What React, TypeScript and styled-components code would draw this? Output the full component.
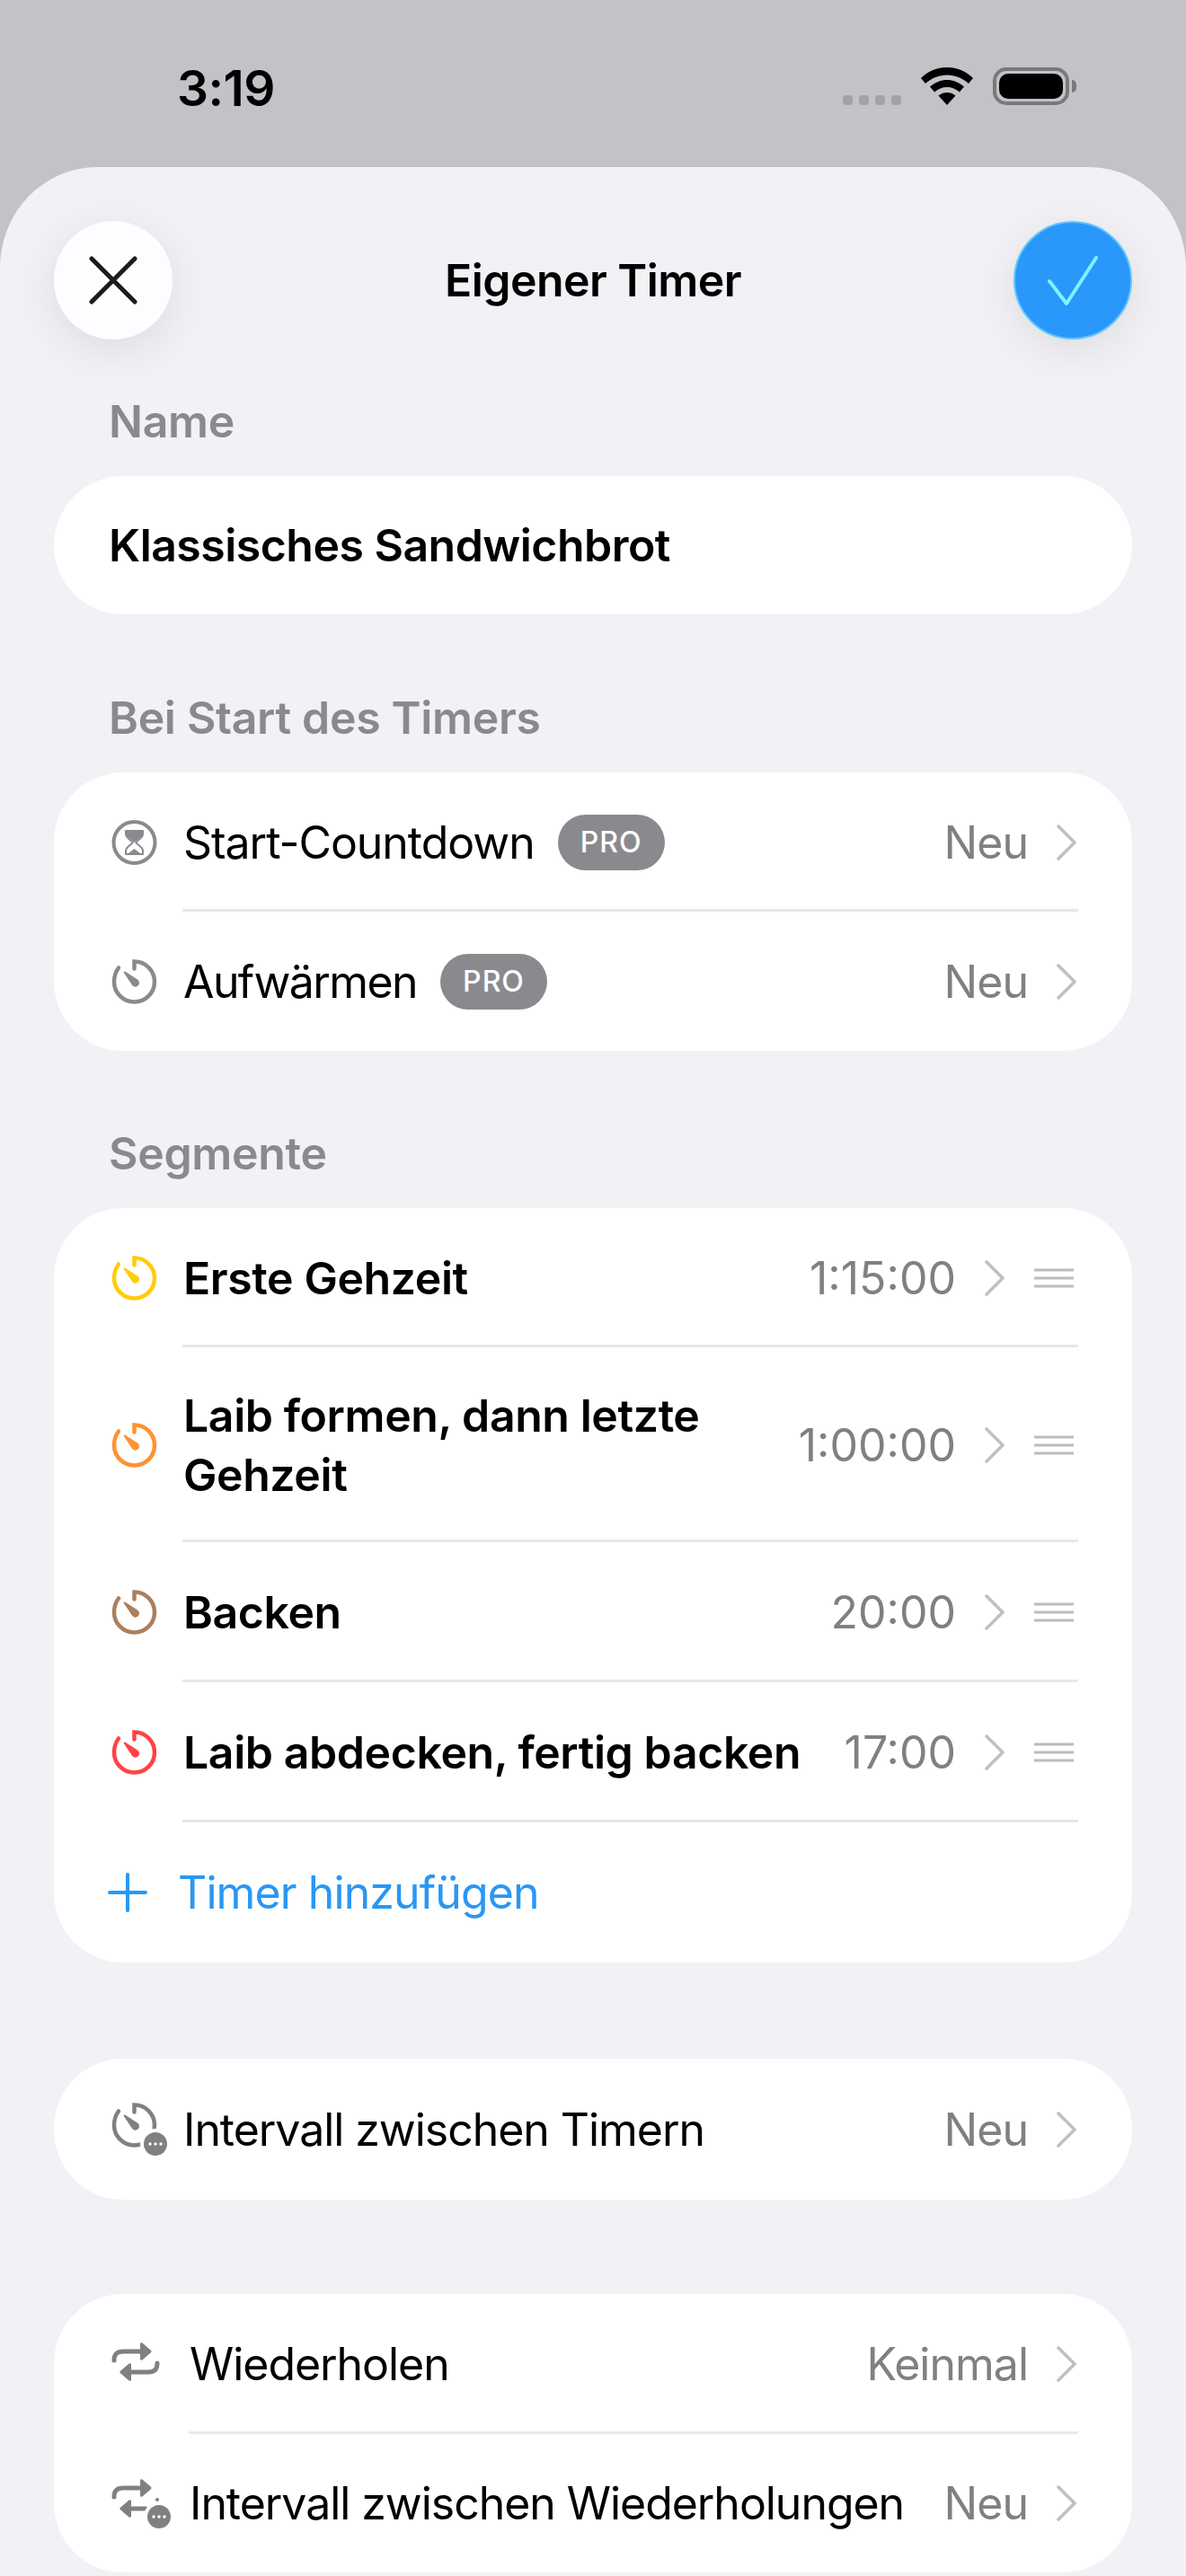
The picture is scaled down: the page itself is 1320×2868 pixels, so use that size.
import React from 'react';
import styled, { createGlobalStyle } from 'styled-components';

const GRAY = '#8a8a8e';

const GlobalStyle = createGlobalStyle`
    html, body {
        margin: 0;
        padding: 0;
        background: #c3c2c7;
    }
    body {
        font-family: Inter, "Noto Sans", sans-serif;
        color: #000;
    }
`;

const TimerGlyph: React.FC<{ color: string }> = ({ color }) => (
    <svg width='51' height='50' viewBox='0 0 51 50' fill='none'>
        <path
            d='M25.5 10.5V2.5A22.5 22.5 0 1 1 3 25C3 19 5 13.5 8 9.5'
            stroke={color}
            strokeWidth='4.5'
            strokeLinecap='round'
        />
        <path d='M13.5 14.5a1.4 1.4 0 0 1 2-.8L29 22.6a4.4 4.4 0 1 1-6 6.2z' fill={color} />
    </svg>
);

const HourglassGlyph: React.FC = () => (
    <svg width='51' height='50' viewBox='0 0 51 50' fill='none'>
        <circle cx='25.5' cy='25' r='23' stroke={GRAY} strokeWidth='4' />
        <path d='M16 12h19v4c0 3.500-6 6.500-7.800 9 1.800 2.500 7.800 5.500 7.800 9v4H16v-4c0-3.500 6-6.500 7.800-9-1.800-2.500-7.800-5.500-7.800-9z' stroke={GRAY} strokeWidth='2' strokeLinejoin='round' />
        <path d='M16 12h19v4c-1 2.500-5 5-9.500 9-4.500-4-8.500-6.500-9.500-9z' fill={GRAY} />
        <path d='M19 37l6.500-5 6.500 5z' fill={GRAY} />
    </svg>
);

const Badge: React.FC<{ cx: number; cy: number }> = ({ cx, cy }) => (
    <g>
        <circle cx={cx} cy={cy} r='17' fill='#fff' />
        <circle cx={cx} cy={cy} r='13' fill='#808080' />
        <circle cx={cx - 6} cy={cy} r='1.7' fill='#fff' />
        <circle cx={cx} cy={cy} r='1.7' fill='#fff' />
        <circle cx={cx + 6} cy={cy} r='1.7' fill='#fff' />
    </g>
);

const TimerBadgeGlyph: React.FC = () => (
    <svg width='64' height='60' viewBox='0 0 64 60' fill='none' style={{ overflow: 'visible' }}>
        <path
            d='M25.5 10.5V2.5A22.5 22.5 0 1 1 3 25C3 19 5 13.5 8 9.5'
            stroke='#808080'
            strokeWidth='4.5'
            strokeLinecap='round'
        />
        <path d='M13.5 14.5a1.4 1.4 0 0 1 2-.8L29 22.6a4.4 4.4 0 1 1-6 6.2z' fill='#808080' />
        <Badge cx={49} cy={46} />
    </svg>
);

const RepeatGlyph: React.FC = () => (
    <svg width='54' height='50' viewBox='0 0 54 50' fill='none'>
        <path d='M3 21c0-7 3-10 10-10h22' stroke='#808080' strokeWidth='5' strokeLinecap='round' />
        <path d='M32 2.500a1.500 1.500 0 0 1 2.400-1L44 9.800a1.600 1.600 0 0 1 0 2.400l-9.600 8.300a1.500 1.500 0 0 1-2.400-1z' fill='#808080' />
        <path d='M51 24c0 7-3 10-10 10H19' stroke='#808080' strokeWidth='5' strokeLinecap='round' />
        <path d='M22 25.500a1.500 1.500 0 0 0-2.400-1L10 32.800a1.600 1.600 0 0 0 0 2.400l9.600 8.300a1.500 1.500 0 0 0 2.400-1z' fill='#808080' />
    </svg>
);

const RepeatBadgeGlyph: React.FC = () => (
    <svg width='68' height='56' viewBox='0 0 68 56' fill='none' style={{ overflow: 'visible' }}>
        <path d='M3 21c0-7 3-10 10-10h22' stroke='#808080' strokeWidth='5' strokeLinecap='round' />
        <path d='M32 2.500a1.500 1.500 0 0 1 2.400-1L44 9.800a1.600 1.600 0 0 1 0 2.400l-9.600 8.300a1.500 1.500 0 0 1-2.400-1z' fill='#808080' />
        <path d='M38 34H19' stroke='#808080' strokeWidth='5' strokeLinecap='round' />
        <path d='M22 25.500a1.500 1.500 0 0 0-2.400-1L10 32.800a1.600 1.600 0 0 0 0 2.400l9.600 8.300a1.500 1.500 0 0 0 2.400-1z' fill='#808080' />
        <circle cx='51' cy='24' r='2' fill='#808080' />
        <Badge cx={53} cy={43} />
    </svg>
);

const Chevron: React.FC = () => (
    <svg width='22' height='40' viewBox='0 0 22 40' fill='none'>
        <path d='M2 2l18 18L2 38' stroke='#c0c0c2' strokeWidth='3.6' strokeLinecap='round' strokeLinejoin='round' />
    </svg>
);

const DragHandle: React.FC = () => (
    <svg width='44' height='24' viewBox='0 0 44 24' fill='none'>
        <path d='M0 3h44M0 12h44M0 21h44' stroke='#bcbcbe' strokeWidth='3' />
    </svg>
);

const segments = [
    { title: 'Erste Gehzeit', time: '1:15:00', color: '#ffcc0a', height: 155 },
    { title: 'Laib formen, dann letzte Gehzeit', time: '1:00:00', color: '#ff9230', height: 217 },
    { title: 'Backen', time: '20:00', color: '#ac7f5e', height: 156 },
    { title: 'Laib abdecken, fertig backen', time: '17:00', color: '#ff4245', height: 156 },
];

export default function App() {
    return (
        <Screen>
            <GlobalStyle />
            <StatusBar>
                <Clock>3:19</Clock>
                <StatusIcons>
                    <CellDots>
                        <i /><i /><i /><i />
                    </CellDots>
                    <svg width='58' height='42' viewBox='0 0 58 42'>
                        <path d='M29 0c11 0 21 4 29 12l-5 6C46 12 38 8.500 29 8.500S12 12 5 18l-5-6C8 4 18 0 29 0z' />
                        <path d='M29 14c7 0 13 2.500 19 7.500l-5 6c-4-3.500-9-5.500-14-5.500s-10 2-14 5.500l-5-6C16 16.500 22 14 29 14z' />
                        <path d='M29 28c3.500 0 6.500 1 9.500 3.500L29 42l-9.500-10.500C22.500 29 25.500 28 29 28z' />
                    </svg>
                    <Battery>
                        <BatteryFill />
                    </Battery>
                </StatusIcons>
            </StatusBar>
            <Sheet>
                <Header>
                    <RoundButton>
                        <svg width='54' height='54' viewBox='0 0 54 54' fill='none'>
                            <path d='M3 3l48 48M51 3L3 51' stroke='#1c1c1e' strokeWidth='5' strokeLinecap='round' />
                        </svg>
                    </RoundButton>
                    <Title>Eigener Timer</Title>
                    <RoundButton $primary>
                        <svg width='56' height='56' viewBox='0 0 56 56' fill='none'>
                            <path d='M2 29l19 25L54 3' stroke='#7df3ff' strokeWidth='4' strokeLinecap='round' strokeLinejoin='round' />
                        </svg>
                    </RoundButton>
                </Header>

                <SectionLabel $top={61}>Name</SectionLabel>
                <NameCard>Klassisches Sandwichbrot</NameCard>

                <SectionLabel $top={85}>Bei Start des Timers</SectionLabel>
                <Card>
                    <Row $height={155}>
                        <IconSlot><HourglassGlyph /></IconSlot>
                        <RowBody $divided>
                            <RowText>Start-Countdown</RowText>
                            <ProBadge>PRO</ProBadge>
                            <Spacer />
                            <Value>Neu</Value>
                            <ChevronSlot><Chevron /></ChevronSlot>
                        </RowBody>
                    </Row>
                    <Row $height={155}>
                        <IconSlot><TimerGlyph color={GRAY} /></IconSlot>
                        <RowBody>
                            <TightText>Aufwärmen</TightText>
                            <ProBadge>PRO</ProBadge>
                            <Spacer />
                            <Value>Neu</Value>
                            <ChevronSlot><Chevron /></ChevronSlot>
                        </RowBody>
                    </Row>
                </Card>

                <SectionLabel $top={84}>Segmente</SectionLabel>
                <Card>
                    {segments.map((segment) => (
                        <Row key={segment.title} $height={segment.height}>
                            <IconSlot><TimerGlyph color={segment.color} /></IconSlot>
                            <RowBody $divided>
                                <SegmentTitle>{segment.title}</SegmentTitle>
                                <Spacer />
                                <TimeValue>{segment.time}</TimeValue>
                                <ChevronSlot><Chevron /></ChevronSlot>
                                <HandleSlot><DragHandle /></HandleSlot>
                            </RowBody>
                        </Row>
                    ))}
                    <AddRow>
                        <svg width='44' height='44' viewBox='0 0 44 44' fill='none'>
                            <path d='M22 2v40M2 22h40' stroke='#2997f5' strokeWidth='4' strokeLinecap='round' />
                        </svg>
                        <AddText>Timer hinzufügen</AddText>
                    </AddRow>
                </Card>

                <PlainCard $top={107}>
                    <Row $height={157}>
                        <IconSlot><TimerBadgeGlyph /></IconSlot>
                        <RowBody>
                            <RowText>Intervall zwischen Timern</RowText>
                            <Spacer />
                            <Value>Neu</Value>
                            <ChevronSlot><Chevron /></ChevronSlot>
                        </RowBody>
                    </Row>
                </PlainCard>

                <PlainCard $top={105}>
                    <Row $height={156}>
                        <IconSlot $wide><RepeatGlyph /></IconSlot>
                        <RowBody $divided>
                            <RowText>Wiederholen</RowText>
                            <Spacer />
                            <Value>Keinmal</Value>
                            <ChevronSlot><Chevron /></ChevronSlot>
                        </RowBody>
                    </Row>
                    <Row $height={154}>
                        <IconSlot $wide><RepeatBadgeGlyph /></IconSlot>
                        <RowBody>
                            <RowText>Intervall zwischen Wiederholungen</RowText>
                            <Spacer />
                            <Value>Neu</Value>
                            <ChevronSlot><Chevron /></ChevronSlot>
                        </RowBody>
                    </Row>
                </PlainCard>
            </Sheet>
        </Screen>
    );
}

const Screen = styled.div`
    width: 1320px;
    height: 2868px;
    overflow: hidden;
    background: #c3c2c7;
`;
const StatusBar = styled.div`
    height: 186px;
    box-sizing: border-box;
    padding: 66px 130px 0 197px;
    display: flex;
    justify-content: space-between;
    align-items: flex-start;
`;
const Clock = styled.div`
    font-size: 55px;
    line-height: 64px;
    font-weight: 600;
    letter-spacing: -0.5px;
`;
const StatusIcons = styled.div`
    display: flex;
    align-items: flex-end;
    gap: 22px;
    margin-top: 9px;
`;
const CellDots = styled.div`
    display: flex;
    gap: 7px;
    i {
        display: block;
        width: 11px;
        height: 11px;
        border-radius: 4px;
        background: #a3a3a6;
    }
`;
const Battery = styled.div`
    position: relative;
    width: 85px;
    height: 42px;
    box-sizing: border-box;
    border: 4px solid #79797c;
    border-radius: 15px;
    padding: 3px;
    &::after {
        content: '';
        position: absolute;
        right: -12px;
        top: 10px;
        width: 5px;
        height: 14px;
        border-radius: 0 6px 6px 0;
        background: #79797c;
    }
`;
const BatteryFill = styled.div`
    height: 100%;
    background: #000;
    border-radius: 10px;
`;
const Sheet = styled.div`
    height: 2682px;
    box-sizing: border-box;
    padding: 60px 60px 0;
    background: #f1f1f6;
    border-radius: 108px 108px 0 0 / 112px 112px 0 0;
`;
const Header = styled.div`
    display: flex;
    align-items: center;
    justify-content: space-between;
`;
const RoundButton = styled.div<{ $primary?: boolean }>`
    width: 132px;
    height: 132px;
    border-radius: 50%;
    display: flex;
    align-items: center;
    justify-content: center;
    background: ${({ $primary }) => ($primary ? '#2a97fb' : '#fdfcff')};
    box-shadow: 0 12px 50px rgba(0, 0, 0, 0.09);
    ${({ $primary }) => $primary && 'border: 2px solid #62c6ff; box-sizing: border-box;'}
`;
const Title = styled.div`
    font-size: 50px;
    line-height: 60px;
    font-weight: 600;
    letter-spacing: -0.55px;
`;
const SectionLabel = styled.div<{ $top: number }>`
    margin-top: ${({ $top }) => $top}px;
    margin-bottom: 31px;
    padding-left: 61px;
    font-size: 50px;
    line-height: 60px;
    font-weight: 600;
    letter-spacing: -0.33px;
    color: ${GRAY};
`;
const NameCard = styled.div`
    height: 154px;
    box-sizing: border-box;
    padding-left: 61px;
    display: flex;
    align-items: center;
    background: #fff;
    border-radius: 77px;
    font-size: 50px;
    font-weight: 600;
    letter-spacing: -0.53px;
`;
const Card = styled.div`
    background: #fff;
    border-radius: 77px;
    padding: 0 60px;
`;
const PlainCard = styled(Card)<{ $top: number }>`
    margin-top: ${({ $top }) => $top}px;
`;
const Row = styled.div<{ $height: number }>`
    display: flex;
    align-items: stretch;
    height: ${({ $height }) => $height}px;
`;
const IconSlot = styled.div<{ $wide?: boolean }>`
    flex: none;
    width: ${({ $wide }) => ($wide ? 90 : 83)}px;
    padding-left: 4px;
    box-sizing: border-box;
    display: flex;
    align-items: center;
    svg {
        flex: none;
    }
`;
const RowBody = styled.div<{ $divided?: boolean }>`
    flex: 1;
    min-width: 0;
    display: flex;
    align-items: center;
    box-sizing: border-box;
    padding-top: 3px;
    border-bottom: 3px solid ${({ $divided }) => ($divided ? '#e8e8ea' : 'transparent')};
`;
const RowText = styled.div`
    margin-left: 1px;
    font-size: 50px;
    line-height: 66px;
    font-weight: 400;
    letter-spacing: -1.05px;
`;
const TightText = styled(RowText)`
    letter-spacing: -1.6px;
`;
const SegmentTitle = styled(RowText)`
    font-weight: 600;
    letter-spacing: -0.42px;
    max-width: 700px;
`;
const ProBadge = styled.div`
    margin-left: 26px;
    width: 119px;
    height: 62px;
    border-radius: 31px;
    background: ${GRAY};
    color: #fff;
    font-size: 32px;
    font-weight: 500;
    letter-spacing: 1px;
    display: flex;
    align-items: center;
    justify-content: center;
`;
const Spacer = styled.div`
    flex: 1;
`;
const Value = styled.div`
    font-size: 50px;
    line-height: 66px;
    color: #808084;
    letter-spacing: -1px;
    white-space: nowrap;
`;
const TimeValue = styled(Value)`
    letter-spacing: 0;
`;
const ChevronSlot = styled.div`
    flex: none;
    margin-left: 32px;
    margin-right: 2px;
    display: flex;
`;
const HandleSlot = styled.div`
    flex: none;
    margin-left: 31px;
    margin-right: 5px;
    display: flex;
`;
const AddRow = styled.div`
    height: 156px;
    display: flex;
    align-items: center;
`;
const AddText = styled.div`
    margin-left: 34px;
    font-size: 50px;
    letter-spacing: -0.9px;
    color: #2997f5;
`;
